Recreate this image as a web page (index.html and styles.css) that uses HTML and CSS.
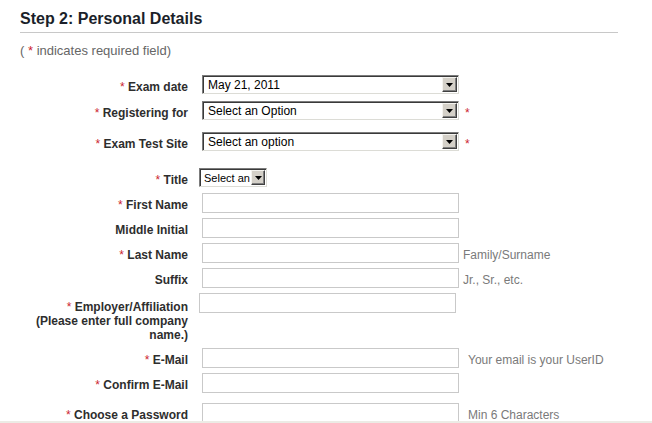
FILE: index.html
```html
<!DOCTYPE html>
<html>
<head>
<meta charset="utf-8">
<title>Step 2: Personal Details</title>
<link rel="stylesheet" href="styles.css">
</head>
<body>
<div class="page">
  <h2 class="step-title">Step 2: Personal Details</h2>
  <p class="note">( <span class="req">*</span> indicates required field)</p>

  <div class="form">
    <div class="row r-exam">
      <label class="lbl"><span class="req">*</span> Exam date</label>
      <div class="field">
        <div class="select wide"><span class="sel-text">May 21, 2011</span><span class="sel-btn"><svg viewBox="0 0 7 4" width="7" height="4"><path d="M0 0h7L3.5 4z" fill="#000"/></svg></span></div>
      </div>
    </div>

    <div class="row r-reg">
      <label class="lbl"><span class="req">*</span> Registering for</label>
      <div class="field">
        <div class="select wide"><span class="sel-text">Select an Option</span><span class="sel-btn"><svg viewBox="0 0 7 4" width="7" height="4"><path d="M0 0h7L3.5 4z" fill="#000"/></svg></span></div>
        <span class="req after">*</span>
      </div>
    </div>

    <div class="row r-site">
      <label class="lbl"><span class="req">*</span> Exam Test Site</label>
      <div class="field">
        <div class="select wide"><span class="sel-text">Select an option</span><span class="sel-btn"><svg viewBox="0 0 7 4" width="7" height="4"><path d="M0 0h7L3.5 4z" fill="#000"/></svg></span></div>
        <span class="req after">*</span>
      </div>
    </div>

    <div class="row r-title">
      <label class="lbl"><span class="req">*</span> Title</label>
      <div class="field shift">
        <div class="select narrow"><span class="sel-text">Select an</span><span class="sel-btn"><svg viewBox="0 0 7 4" width="7" height="4"><path d="M0 0h7L3.5 4z" fill="#000"/></svg></span></div>
      </div>
    </div>

    <div class="row r-first">
      <label class="lbl"><span class="req">*</span> First Name</label>
      <div class="field"><input class="txt" type="text"></div>
    </div>

    <div class="row r-std">
      <label class="lbl">Middle Initial</label>
      <div class="field"><input class="txt" type="text"></div>
    </div>

    <div class="row r-std">
      <label class="lbl"><span class="req">*</span> Last Name</label>
      <div class="field"><input class="txt" type="text"><span class="hint">Family/Surname</span></div>
    </div>

    <div class="row r-std">
      <label class="lbl">Suffix</label>
      <div class="field"><input class="txt" type="text"><span class="hint">Jr., Sr., etc.</span></div>
    </div>

    <div class="row r-std">
      <label class="lbl multi"><span class="req">*</span> Employer/Affiliation<br>(Please enter full company<br>name.)</label>
      <div class="field shift"><input class="txt" type="text"></div>
    </div>

    <div class="row r-email">
      <label class="lbl"><span class="req">*</span> E-Mail</label>
      <div class="field"><input class="txt" type="text"><span class="hint far">Your email is your UserID</span></div>
    </div>

    <div class="row r-std">
      <label class="lbl"><span class="req">*</span> Confirm E-Mail</label>
      <div class="field"><input class="txt" type="text"></div>
    </div>

    <div class="row r-pass">
      <label class="lbl"><span class="req">*</span> Choose a Password</label>
      <div class="field"><input class="txt" type="password"><span class="hint far">Min 6 Characters</span></div>
    </div>
  </div>
</div>
<div class="status-edge"></div>
</body>
</html>
```

FILE: styles.css
```css
html, body {
  margin: 0;
  padding: 0;
  background: #ffffff;
  overflow: hidden;
}

body {
  font-family: "Liberation Sans", Arial, sans-serif;
  font-size: 12px;
  color: #333333;
}

.page {
  padding-left: 20px;
}

.step-title {
  margin: 0;
  padding: 10px 0 4px 0;
  width: 598px;
  font-size: 16px;
  line-height: 18px;
  font-weight: bold;
  color: #1b1f2a;
  border-bottom: 1px solid #c8c8c8;
}

.note {
  margin: 10px 0 0 0;
  font-size: 13px;
  line-height: 15px;
  color: #666666;
}

.req {
  color: #cc1f2f;
  font-weight: normal;
}

.form {
  display: flex;
  flex-direction: column;
  margin-top: 17px;
}

.row {
  display: grid;
  grid-template-columns: 168px 1fr;
  column-gap: 14px;
  align-items: start;
}

.r-exam { margin-top: 0; }
.r-reg { margin-top: 7px; }
.r-site { margin-top: 12px; }
.r-title { margin-top: 17px; }
.r-first { margin-top: 6px; }
.r-std { margin-top: 5px; }
.r-email { margin-top: 7px; }
.r-pass { margin-top: 10px; }

.lbl {
  display: block;
  text-align: right;
  font-weight: bold;
  font-size: 12px;
  line-height: 15px;
  padding-top: 5px;
  margin-bottom: -2px;
  color: #2e2e2e;
}

.lbl.multi {
  padding-top: 7px;
  line-height: 14px;
  margin-bottom: -1px;
}

.field {
  display: flex;
  align-items: flex-start;
}

.field.shift {
  margin-left: -3px;
}

.select {
  box-sizing: border-box;
  height: 19px;
  display: flex;
  align-items: stretch;
  background: #ffffff;
  border-top: 1px solid #7c7c7c;
  border-left: 1px solid #7c7c7c;
  border-right: 1px solid #dcdcd6;
  border-bottom: 1px solid #dcdcd6;
  box-shadow: inset 1px 1px 0 #3a3a3a;
  padding: 1px;
  font-size: 12px;
  color: #000000;
}

.select.wide { width: 257px; }
.select.narrow { width: 68px; }

.sel-text {
  flex: 1;
  padding-left: 4px;
  padding-top: 2px;
  line-height: 13px;
  white-space: nowrap;
}

.select.narrow .sel-text {
  padding-left: 3px;
  font-size: 11px;
}

.sel-btn {
  box-sizing: border-box;
  width: 15px;
  flex: none;
  display: flex;
  align-items: center;
  justify-content: center;
  background: #d4d0c8;
  border-top: 1px solid #f4f3ef;
  border-left: 1px solid #f4f3ef;
  border-right: 1px solid #404040;
  border-bottom: 1px solid #404040;
  box-shadow: inset -1px -1px 0 #808080;
}

.select.narrow .sel-btn { width: 14px; }

.sel-btn svg { display: block; margin-top: 1px; }

.req.after {
  margin-left: 6px;
  padding-top: 5px;
  line-height: 15px;
  margin-bottom: -2px;
}

.txt {
  box-sizing: border-box;
  width: 257px;
  height: 20px;
  margin: 0;
  padding: 1px 3px;
  border: 1px solid #c9c9c9;
  background: #ffffff;
  font-family: "Liberation Sans", Arial, sans-serif;
  font-size: 12px;
  outline: none;
}

.hint {
  margin-left: 4px;
  padding-top: 5px;
  line-height: 15px;
  margin-bottom: -2px;
  color: #7a7a7a;
  white-space: nowrap;
}

.hint.far {
  margin-left: 9px;
}

.status-edge {
  position: fixed;
  left: 0;
  right: 0;
  bottom: 0;
  height: 2px;
  background: #ecebe5;
}
```
